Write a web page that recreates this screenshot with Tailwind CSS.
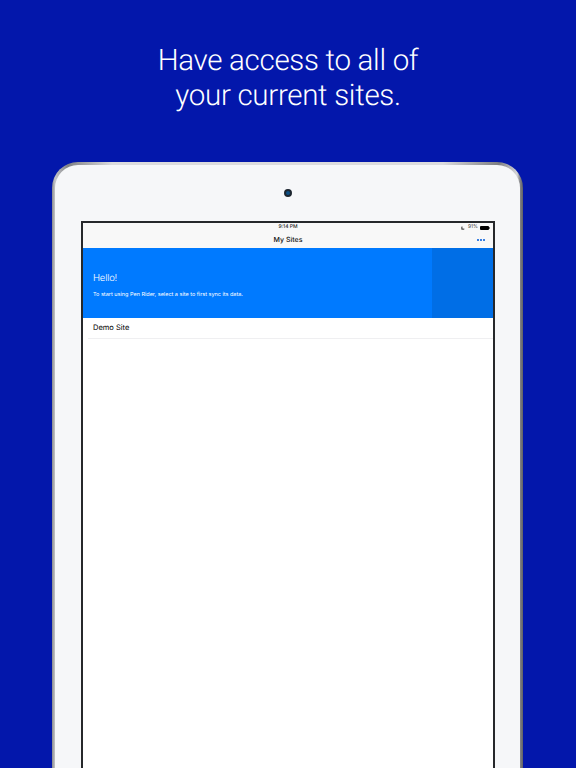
<!doctype html>
<html>
<head>
<meta charset="utf-8">
<script src="https://cdn.jsdelivr.net/npm/@tailwindcss/browser@4"></script>
</head>
<body class="h-[768px] overflow-hidden bg-[#0317ab] font-['Inter',sans-serif] [text-rendering:geometricPrecision]">
  <h1 class="pt-[44px] text-center font-['Roboto',sans-serif] text-[29.5px] leading-[35px] font-light tracking-[-0.3px] text-white">Have access to all of<br>your current sites.</h1>

  <!-- tablet -->
  <div class="mt-[48px] ml-[52px] h-[606px] w-[471px] rounded-t-[26px] bg-[linear-gradient(to_right,#8a8b8f_0,#c4c5c8_3px,#808185_16px,#dcdcde_60px,#dcdcde_calc(100%-80px),#7c7d81_calc(100%-24px),#d6d6d8_calc(100%-6px),#85868a_calc(100%-3px),#5f6064_100%)] px-[3px] pt-[3px]">
    <div class="flex h-full flex-col items-center rounded-t-[23px] bg-[#f6f7f9]">
      <div class="mt-[24px] mb-[24px] h-2 w-2 rounded-full border-2 border-[#1d2630] bg-[#0d4f86]"></div>

      <!-- screen -->
      <div class="ml-[26px] w-[414px] flex-1 self-start border-2 border-b-0 border-[#26282b] bg-white">
        <div class="h-[25px] bg-[#f8f8f8]">
          <div class="relative flex h-[7px] items-end justify-center text-[5px] leading-[6px] font-medium text-[#222]">
            9:14 PM
            <div class="absolute top-[2px] right-[3px] flex items-center leading-[5px] font-normal text-[#333]">
              <svg class="mr-[3px] h-[4px] w-[4px]" viewBox="0 0 4 4"><path d="M1.6 0.2a2 2 0 1 0 2.2 2.4a1.8 1.8 0 0 1-2.2-2.4z" fill="#777"/></svg>
              <span class="mr-[2px]">91%</span>
              <div class="h-[4px] w-[9px] rounded-[1px] bg-black"></div>
              <div class="h-[2px] w-[1px] bg-[#777]"></div>
            </div>
          </div>
          <div class="relative mt-[5px] flex h-[10px] items-center justify-center text-[7px] leading-[10px] font-medium text-[#111]">
            My Sites
            <div class="absolute top-[4px] right-[8px] flex gap-[1px]">
              <span class="h-[2px] w-[2px] bg-[#3a7fe0]"></span>
              <span class="h-[2px] w-[2px] bg-[#3a7fe0]"></span>
              <span class="h-[2px] w-[2px] bg-[#3a7fe0]"></span>
            </div>
          </div>
        </div>

        <!-- hello banner -->
        <div class="flex h-[70px] bg-[#007aff] text-white">
          <div class="flex-1 pt-[25px] pl-[10px]">
            <div class="text-[9.5px] leading-[12px] font-light tracking-[-0.2px]">Hello!</div>
            <div class="mt-[6px] text-[5.5px] leading-[8px]">To start using Pen Rider, select a site to first sync its data.</div>
          </div>
          <div class="w-[61px] bg-[#006ee6]"></div>
        </div>

        <!-- sites -->
        <div class="ml-[5px] flex h-[21px] items-center border-b border-[#efeff1] pl-[5px] text-[7.5px] text-black">Demo Site</div>
      </div>
    </div>
  </div>
</body>
</html>
